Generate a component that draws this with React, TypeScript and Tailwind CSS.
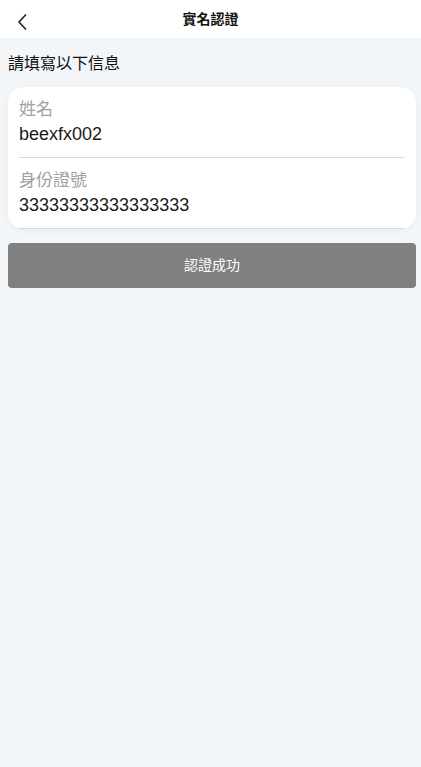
const fields = [
  { label: '姓名', value: 'beexfx002' },
  { label: '身份證號', value: '33333333333333333' },
];

export default function App() {
  return (
    <div
      className="min-h-screen bg-[#f3f6f9] text-[#222]"
      style={{ fontFamily: '"Liberation Sans", "Noto Sans CJK TC", sans-serif' }}
    >
      {/* header */}
      <header className="relative flex h-[38px] items-center justify-center bg-white">
        <button className="absolute left-[12px] top-[9px] p-1">
          <svg width="14" height="18" viewBox="0 0 14 18" fill="none">
            <path d="M10 1.5 L3 9 L10 16.5" stroke="#222" strokeWidth="1.6" />
          </svg>
        </button>
        <h1 className="text-[14px] font-bold text-[#111]">實名認證</h1>
      </header>

      <main className="pl-2 pr-[5px]">
        <p className="pt-[15px] text-[16px] leading-[22px] text-[#111]">請填寫以下信息</p>

        <div className="mt-3 rounded-[16px] bg-white pl-[11px] pr-[12px] shadow-[0_2px_8px_rgba(0,0,0,0.04)]">
          {fields.map((f) => (
            <div key={f.label} className="border-b border-[#d9d9d9] pb-[10px] pt-[11px]">
              <div className="text-[17px] leading-[24px] text-[#a0a0a0]">{f.label}</div>
              <div className="text-[18px] leading-[25px] text-[#1a1a1a]">{f.value}</div>
            </div>
          ))}
        </div>

        <button className="mt-[14px] flex h-[45px] w-full items-center justify-center rounded-[4px] bg-[#808080] text-[14px] text-white">
          認證成功
        </button>
      </main>
    </div>
  );
}
